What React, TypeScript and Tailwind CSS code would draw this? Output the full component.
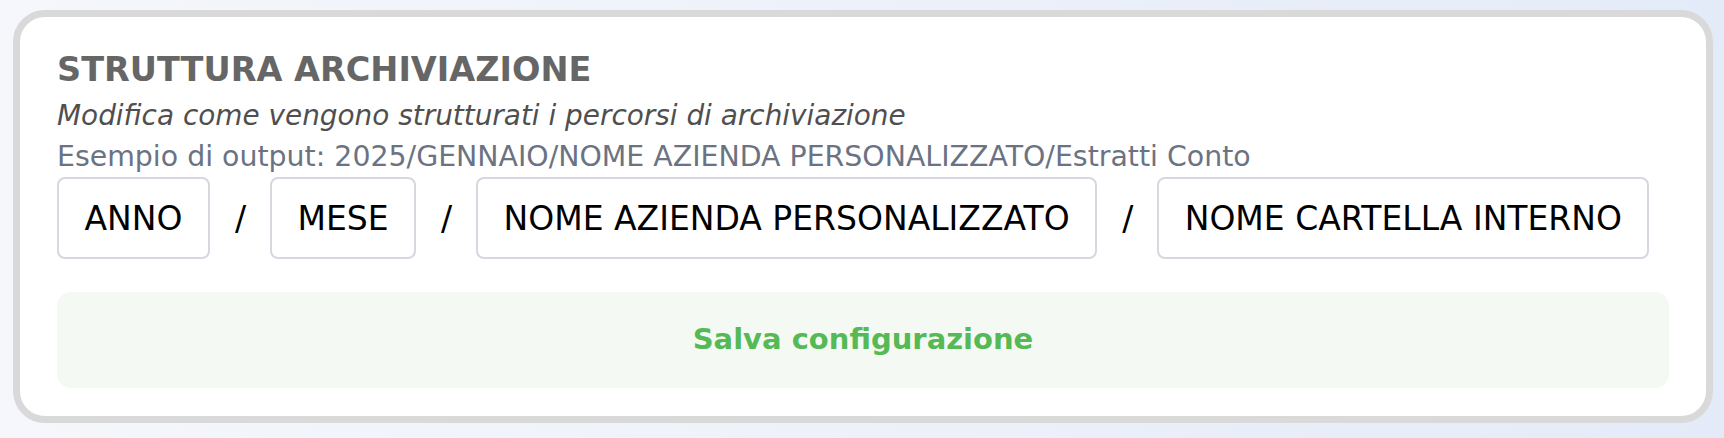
import React from 'react';

const segments = ['ANNO', 'MESE', 'NOME AZIENDA PERSONALIZZATO', 'NOME CARTELLA INTERNO'];

const PathSegment = ({ label }: { label: string }) => (
  <div className="h-[82px] flex items-center px-[25.5px] border-2 border-[#d5d8de] rounded-lg bg-white text-[33px] leading-none text-black whitespace-nowrap">
    {label}
  </div>
);

const App = () => {
  return (
    <div className="h-[438px] w-full pl-[13px] pr-[11px] pt-[10px] bg-linear-to-r from-[#f5f7fb] to-[#e4ebf8] font-['DejaVu_Sans',sans-serif]">
      <section className="bg-white border-[7px] border-[#d9d9d9] rounded-[32px] pt-[33px] pb-[28px] px-[37px]">
        <h2 className="text-[33.5px] leading-[40px] font-bold text-[#666666]">STRUTTURA ARCHIVIAZIONE</h2>
        <p className="mt-2 text-[27.9px] leading-[36px] italic text-[#4f4f4f]">
          Modifica come vengono strutturati i percorsi di archiviazione
        </p>
        <p className="mt-[5px] text-[28.4px] leading-[36px] text-[#6b7383] whitespace-nowrap">
          Esempio di output: 2025/GENNAIO/NOME AZIENDA PERSONALIZZATO/Estratti Conto
        </p>
        <div className="mt-[2px] flex items-center gap-[25px]">
          {segments.map((s, i) => (
            <React.Fragment key={s}>
              {i > 0 && <span className="w-[10px] text-center text-[33px] leading-none text-black">/</span>}
              <PathSegment label={s} />
            </React.Fragment>
          ))}
        </div>
        <button className="mt-[33px] w-full h-[96px] rounded-[14px] bg-[#f4f9f3] text-[29px] font-bold text-[#55b955]">
          Salva configurazione
        </button>
      </section>
    </div>
  );
};

export default App;
